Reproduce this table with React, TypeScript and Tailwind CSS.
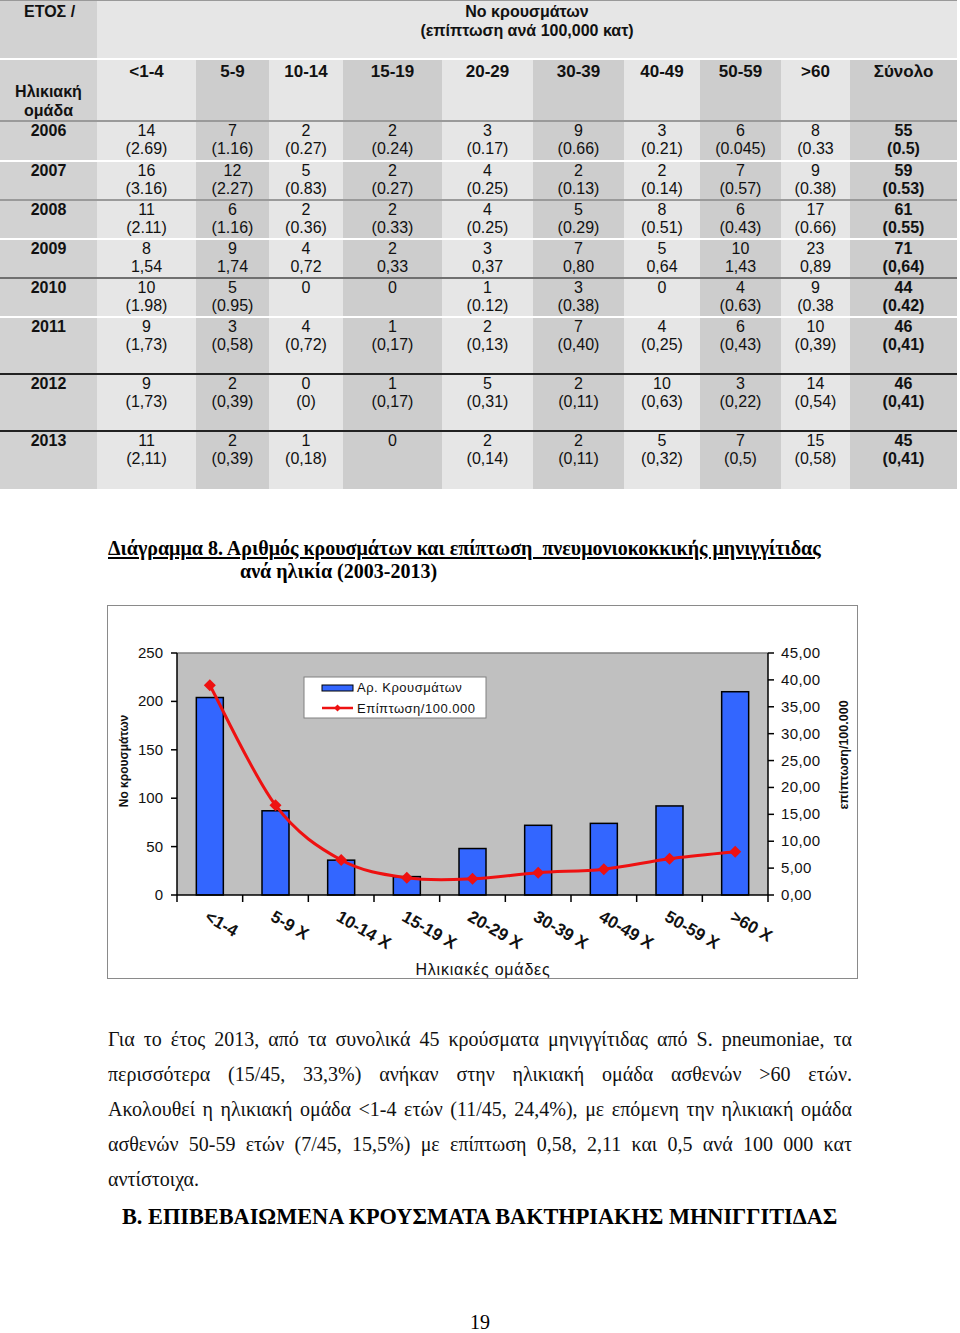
import React from 'react';

const ages = ['<1-4', '5-9', '10-14', '15-19', '20-29', '30-39', '40-49', '50-59', '>60', 'Σύνολο'];
const LIGHT = 'bg-[#e6e6e6]';
const DARK = 'bg-[#cdcdcd]';

type Row = { year: string; border: string; h: string; cells: [string, string][] };

const rows: Row[] = [
  { year: '2006', border: 'border-[#9a9a9a]', h: 'h-[40px]', cells: [['14', '(2.69)'], ['7', '(1.16)'], ['2', '(0.27)'], ['2', '(0.24)'], ['3', '(0.17)'], ['9', '(0.66)'], ['3', '(0.21)'], ['6', '(0.045)'], ['8', '(0.33'], ['55', '(0.5)']] },
  { year: '2007', border: 'border-white', h: 'h-[39px]', cells: [['16', '(3.16)'], ['12', '(2.27)'], ['5', '(0.83)'], ['2', '(0.27)'], ['4', '(0.25)'], ['2', '(0.13)'], ['2', '(0.14)'], ['7', '(0.57)'], ['9', '(0.38)'], ['59', '(0.53)']] },
  { year: '2008', border: 'border-[#9a9a9a]', h: 'h-[39px]', cells: [['11', '(2.11)'], ['6', '(1.16)'], ['2', '(0.36)'], ['2', '(0.33)'], ['4', '(0.25)'], ['5', '(0.29)'], ['8', '(0.51)'], ['6', '(0.43)'], ['17', '(0.66)'], ['61', '(0.55)']] },
  { year: '2009', border: 'border-white', h: 'h-[39px]', cells: [['8', '1,54'], ['9', '1,74'], ['4', '0,72'], ['2', '0,33'], ['3', '0,37'], ['7', '0,80'], ['5', '0,64'], ['10', '1,43'], ['23', '0,89'], ['71', '(0,64)']] },
  { year: '2010', border: 'border-[#707070]', h: 'h-[39px]', cells: [['10', '(1.98)'], ['5', '(0.95)'], ['0', ''], ['0', ''], ['1', '(0.12)'], ['3', '(0.38)'], ['0', ''], ['4', '(0.63)'], ['9', '(0.38'], ['44', '(0.42)']] },
  { year: '2011', border: 'border-white', h: 'h-[57px]', cells: [['9', '(1,73)'], ['3', '(0,58)'], ['4', '(0,72)'], ['1', '(0,17)'], ['2', '(0,13)'], ['7', '(0,40)'], ['4', '(0,25)'], ['6', '(0,43)'], ['10', '(0,39)'], ['46', '(0,41)']] },
  { year: '2012', border: 'border-[#222]', h: 'h-[57px]', cells: [['9', '(1,73)'], ['2', '(0,39)'], ['0', '(0)'], ['1', '(0,17)'], ['5', '(0,31)'], ['2', '(0,11)'], ['10', '(0,63)'], ['3', '(0,22)'], ['14', '(0,54)'], ['46', '(0,41)']] },
  { year: '2013', border: 'border-[#222]', h: 'h-[59px]', cells: [['11', '(2,11)'], ['2', '(0,39)'], ['1', '(0,18)'], ['0', ''], ['2', '(0,14)'], ['2', '(0,11)'], ['5', '(0,32)'], ['7', '(0,5)'], ['15', '(0,58)'], ['45', '(0,41)']] },
];

const gridCols = 'grid grid-cols-[97px_99px_73px_74px_99px_91px_91px_76px_81px_69px_107px]';

function Table() {
  return (
    <div className="w-[957px] font-['Liberation_Sans',Arial,sans-serif] text-[#111]">
      <div className="flex h-[58px] border-t border-[#999]">
        <div className="w-[97px] bg-[#d2d2d2] pl-[24px] pt-[1px] text-[16px] leading-[19px] font-bold">ΕΤΟΣ /</div>
        <div className="flex-1 bg-[#e6e6e6] text-center text-[16px] leading-[19px] font-bold pt-[1px]">
          <div>Νο κρουσμάτων</div>
          <div>(επίπτωση ανά 100,000 κατ)</div>
        </div>
      </div>
      <div className={`${gridCols} h-[62px] border-t-2 border-white`}>
        <div className="bg-[#d2d2d2] pt-[22px] text-center text-[16px] leading-[19px] font-bold">
          <div>Ηλικιακή</div>
          <div>ομάδα</div>
        </div>
        {ages.map((a, i) => (
          <div key={a} className={`${i % 2 ? DARK : LIGHT} text-center text-[17px] leading-[20px] font-bold pt-[2px]`}>{a}</div>
        ))}
      </div>
      {rows.map((r) => (
        <div key={r.year} className={`${gridCols} ${r.h} border-t-2 ${r.border}`}>
          <div className="bg-[#d2d2d2] text-center text-[16px] leading-[18px] font-bold">{r.year}</div>
          {r.cells.map((c, i) => (
            <div
              key={i}
              className={`${i % 2 ? DARK : LIGHT} text-center text-[16px] leading-[18px] ${i === 9 ? 'font-bold' : ''}`}
            >
              <div>{c[0]}</div>
              <div>{c[1]}</div>
            </div>
          ))}
        </div>
      ))}
    </div>
  );
}

const bars = [204, 87, 36, 19, 48, 72, 74, 92, 210];
const rates = [39, 16.7, 6.5, 3.2, 3.0, 4.15, 4.8, 6.75, 8.05];
const xLabels = ['<1-4', '5-9 Χ', '10-14 Χ', '15-19 Χ', '20-29 Χ', '30-39 Χ', '40-49 Χ', '50-59 Χ', '>60 Χ'];

const PL = 69, PR = 660, PT = 47, PB = 289;
const catW = (PR - PL) / 9;
const yL = (v: number) => PB - (v * (PB - PT)) / 250;
const yR = (v: number) => PB - (v * (PB - PT)) / 45;

function smoothPath(pts: [number, number][]) {
  let d = `M${pts[0][0]},${pts[0][1]}`;
  for (let i = 0; i < pts.length - 1; i++) {
    const p0 = pts[i - 1] || pts[i];
    const p1 = pts[i];
    const p2 = pts[i + 1];
    const p3 = pts[i + 2] || p2;
    const c1x = p1[0] + (p2[0] - p0[0]) / 6;
    const c1y = p1[1] + (p2[1] - p0[1]) / 6;
    const c2x = p2[0] - (p3[0] - p1[0]) / 6;
    const c2y = p2[1] - (p3[1] - p1[1]) / 6;
    d += ` C${c1x},${c1y} ${c2x},${c2y} ${p2[0]},${p2[1]}`;
  }
  return d;
}

function Chart() {
  const pts: [number, number][] = rates.map((v, i) => [PL + catW * (i + 0.5), yR(v)]);
  const font = "'Liberation Sans', Arial, sans-serif";
  return (
    <div className="w-[751px] h-[374px] border border-[#8a8a8a] bg-white">
      <svg width="749" height="372" viewBox="0 0 749 372" fontFamily={font}>
        <rect x={PL} y={PT} width={PR - PL} height={PB - PT} fill="#c0c0c0" />
        <line x1={PL} y1={PT} x2={PR} y2={PT} stroke="#808080" strokeWidth="1.5" />
        {bars.map((v, i) => {
          const cx = PL + catW * (i + 0.5);
          return (
            <rect key={i} x={cx - 13.5} y={yL(v)} width="27" height={PB - yL(v)} fill="#3366ff" stroke="#000" strokeWidth="1.5" />
          );
        })}
        <line x1={PL} y1={PT} x2={PL} y2={PB} stroke="#000" strokeWidth="1.5" />
        <line x1={PR} y1={PT} x2={PR} y2={PB} stroke="#000" strokeWidth="1.5" />
        <line x1={PL} y1={PB} x2={PR} y2={PB} stroke="#000" strokeWidth="1.5" />
        {[0, 50, 100, 150, 200, 250].map((v) => (
          <g key={v}>
            <line x1={PL - 6} y1={yL(v)} x2={PL} y2={yL(v)} stroke="#000" strokeWidth="1.5" />
            <text x="55" y={yL(v) + 5} textAnchor="end" fontSize="15" fill="#111">{v}</text>
          </g>
        ))}
        {[0, 5, 10, 15, 20, 25, 30, 35, 40, 45].map((v) => (
          <g key={v}>
            <line x1={PR} y1={yR(v)} x2={PR + 6} y2={yR(v)} stroke="#000" strokeWidth="1.5" />
            <text x="673" y={yR(v) + 5} fontSize="15" letterSpacing="0.4" fill="#111">{v},00</text>
          </g>
        ))}
        {Array.from({ length: 10 }).map((_, k) => (
          <line key={k} x1={PL + catW * k} y1={PB} x2={PL + catW * k} y2={PB + 7} stroke="#000" strokeWidth="1.5" />
        ))}
        <path d={smoothPath(pts)} fill="none" stroke="#ee1111" strokeWidth="3" />
        {pts.map((p, i) => (
          <polygon key={i} points={`${p[0]},${p[1] - 6} ${p[0] + 6},${p[1]} ${p[0]},${p[1] + 6} ${p[0] - 6},${p[1]}`} fill="#ee1111" />
        ))}
        {xLabels.map((l, i) => {
          const x = PL + catW * (i + 0.5) - 6;
          const y = 314;
          return (
            <text key={l} x={x} y={y} fontSize="17" fontWeight="bold" fill="#111" transform={`rotate(30 ${x} ${y})`}>{l}</text>
          );
        })}
        <text x="375" y="369" textAnchor="middle" fontSize="16" letterSpacing="0.8" fill="#111">Ηλικιακές ομάδες</text>
        <text x="0" y="0" transform="translate(20 155) rotate(-90)" textAnchor="middle" fontSize="12" fontWeight="bold" fill="#111">Νο κρουσμάτων</text>
        <text x="0" y="0" transform="translate(740 149) rotate(-90)" textAnchor="middle" fontSize="12.5" fontWeight="bold" fill="#111">επίπτωση/100.000</text>
        <rect x="196" y="71" width="182" height="41" fill="#fff" stroke="#808080" strokeWidth="1" />
        <rect x="214" y="79" width="31" height="6" fill="#3366ff" stroke="#000" strokeWidth="1" />
        <text x="249" y="86" fontSize="13" letterSpacing="0.5" fill="#111">Αρ. Κρουσμάτων</text>
        <line x1="214" y1="102" x2="245" y2="102" stroke="#ee1111" strokeWidth="2.5" />
        <polygon points="229.5,98.5 233,102 229.5,105.5 226,102" fill="#ee1111" />
        <text x="249" y="107" fontSize="13" letterSpacing="0.5" fill="#111">Επίπτωση/100.000</text>
      </svg>
    </div>
  );
}

const lines = [
  'Για το έτος 2013, από τα συνολικά 45 κρούσματα μηνιγγίτιδας  από S. pneumoniae, τα',
  'περισσότερα (15/45, 33,3%) ανήκαν στην  ηλικιακή  ομάδα ασθενών  >60 ετών.',
  'Ακολουθεί η ηλικιακή ομάδα  <1-4 ετών (11/45, 24,4%), με επόμενη την  ηλικιακή ομάδα',
  'ασθενών 50-59 ετών (7/45, 15,5%) με επίπτωση  0,58, 2,11 και 0,5   ανά 100 000 κατ',
];

export default function App() {
  return (
    <div className="w-[960px] h-[1333px] overflow-hidden bg-white text-black">
      <Table />
      <div className="ml-[108px] mt-[48px] font-['Liberation_Serif','Times_New_Roman',serif] font-bold text-[20px] leading-[23px]">
        <div><span className="underline underline-offset-2">Διάγραμμα 8. Αριθμός κρουσμάτων και επίπτωση&nbsp; πνευμονιοκοκκικής μηνιγγίτιδας</span></div>
        <div className="pl-[132px]">ανά ηλικία (2003-2013)</div>
      </div>
      <div className="ml-[107px] mt-[22px]">
        <Chart />
      </div>
      <div className="ml-[108px] w-[744px] mt-[43px] font-['Liberation_Serif','Times_New_Roman',serif] text-[20px] leading-[35px] text-[#111]">
        {lines.map((l) => (
          <div key={l} className="text-justify [text-align-last:justify]">{l}</div>
        ))}
        <div>αντίστοιχα.</div>
      </div>
      <div className="ml-[122px] mt-[5px] font-['Liberation_Serif','Times_New_Roman',serif] font-bold text-[22.3px] leading-[30px]">
        Β. ΕΠΙΒΕΒΑΙΩΜΕΝΑ ΚΡΟΥΣΜΑΤΑ ΒΑΚΤΗΡΙΑΚΗΣ ΜΗΝΙΓΓΙΤΙΔΑΣ
      </div>
      <div className="mt-[78px] text-center font-['Liberation_Serif','Times_New_Roman',serif] text-[20px] leading-[24px]">19</div>
    </div>
  );
}
